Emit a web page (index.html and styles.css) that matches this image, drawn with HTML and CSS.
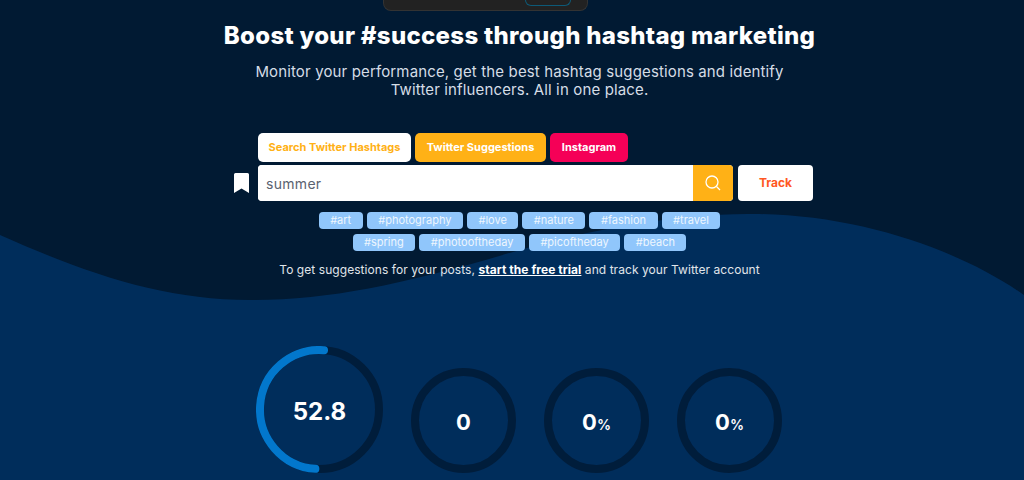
FILE: index.html
```html
<!DOCTYPE html>
<html lang="en">
<head>
  <meta charset="UTF-8">
  <title>Hashtag Marketing</title>
  <link rel="stylesheet" href="styles.css">
</head>
<body>

<div class="page">
  <svg class="wave" viewBox="0 0 1024 480" preserveAspectRatio="none">
    <path d="M0 235C90 275 165 300 250 300C330 300 400 285 513 252C590 229 680 213 755 214C860 215 960 250 1024 295V480H0Z"/>
  </svg>

  <div class="top-card"><span class="top-pill"></span></div>

  <h1>Boost your #success through hashtag marketing</h1>
  <p class="intro">Monitor your performance, get the best hashtag suggestions and identify<br>Twitter influencers. All in one place.</p>

  <div class="search-block">
    <div class="tabs">
      <button class="tab tab-active">Search Twitter Hashtags</button>
      <button class="tab tab-orange">Twitter Suggestions</button>
      <button class="tab tab-pink">Instagram</button>
    </div>
    <div class="search-row">
      <svg class="bookmark" viewBox="0 0 15 20"><path d="M1.5 0H13.5A1.5 1.5 0 0 1 15 1.500V20L7.500 15.500L0 20V1.500A1.500 1.500 0 0 1 1.500 0Z"/></svg>
      <div class="search-box">
        <input type="text" value="summer">
        <button class="search-btn">
          <svg viewBox="0 0 16 16"><circle cx="7" cy="7" r="6"/><path d="M11.500 11.500L15 15"/></svg>
        </button>
      </div>
      <button class="track">Track</button>
    </div>
  </div>

  <div class="tags">
    <div class="tag-row">
      <span class="tag">#art</span>
      <span class="tag">#photography</span>
      <span class="tag">#love</span>
      <span class="tag">#nature</span>
      <span class="tag">#fashion</span>
      <span class="tag">#travel</span>
    </div>
    <div class="tag-row">
      <span class="tag">#spring</span>
      <span class="tag">#photooftheday</span>
      <span class="tag">#picoftheday</span>
      <span class="tag">#beach</span>
    </div>
  </div>

  <p class="notice">To get suggestions for your posts, <a href="#">start the free trial</a> and track your Twitter account</p>

  <div class="rings">
    <div class="ring ring-big">
      <svg viewBox="0 0 127 127">
        <circle class="ring-track" cx="63.500" cy="63.500" r="59.500"/>
        <circle class="ring-value" cx="63.500" cy="63.500" r="59.500" stroke-dasharray="187 374" transform="rotate(94 63.500 63.500)"/>
      </svg>
      <span class="ring-num">52.8</span>
    </div>
    <div class="ring">
      <svg viewBox="0 0 105 105"><circle class="ring-track" cx="52.500" cy="52.500" r="48.500"/></svg>
      <span class="ring-num">0</span>
    </div>
    <div class="ring">
      <svg viewBox="0 0 105 105"><circle class="ring-track" cx="52.500" cy="52.500" r="48.500"/></svg>
      <span class="ring-num">0<small>%</small></span>
    </div>
    <div class="ring">
      <svg viewBox="0 0 105 105"><circle class="ring-track" cx="52.500" cy="52.500" r="48.500"/></svg>
      <span class="ring-num">0<small>%</small></span>
    </div>
  </div>
</div>

</body>
</html>
```

FILE: styles.css
```css
body {
  margin: 0;
  font-family: Inter, "Liberation Sans", sans-serif;
  background: #011a33;
  color: #ffffff;
}

.page {
  position: relative;
  height: 480px;
  overflow: hidden;
  display: flex;
  flex-direction: column;
  align-items: center;
  padding-left: 15px;
  box-sizing: border-box;
}

.wave {
  position: absolute;
  top: 0;
  left: 0;
  width: 100%;
  height: 100%;
}

.wave path {
  fill: #002d5b;
}

.page > *:not(.wave) {
  position: relative;
}

.top-card {
  flex: none;
  width: 205px;
  height: 11px;
  margin-right: 68px;
  box-sizing: border-box;
  background: #222222;
  border: 1px solid #333333;
  border-top: none;
  border-radius: 0 0 8px 8px;
}

.top-pill {
  position: absolute;
  right: 16px;
  top: 0;
  width: 46px;
  height: 6px;
  box-sizing: border-box;
  border: 1px solid #0d5a78;
  border-top: none;
  border-radius: 0 0 12px 12px;
}

h1 {
  margin: 10px 0 0;
  font-size: 24px;
  line-height: 30px;
  font-weight: 800;
  letter-spacing: 0.3px;
  white-space: nowrap;
}

.intro {
  margin: 12px 0 0;
  font-size: 15px;
  line-height: 17.500px;
  text-align: center;
  color: #d5dde6;
  letter-spacing: 0.14px;
}

.search-block {
  width: 579px;
  margin: 35px -8px 0 0;
}

.tabs {
  display: flex;
  gap: 4px;
  margin-left: 24px;
}

.tab {
  height: 29px;
  padding: 0 0 2px;
  border: none;
  border-radius: 5px;
  font-family: inherit;
  font-size: 11px;
  font-weight: 700;
  color: #ffffff;
}

.tab-active {
  width: 153px;
  background: #ffffff;
  color: #ffb116;
}

.tab-orange {
  width: 131px;
  background: #ffb116;
}

.tab-pink {
  width: 78px;
  background: #f50057;
}

.search-row {
  display: flex;
  align-items: center;
  margin-top: 3px;
}

.bookmark {
  width: 15px;
  height: 20px;
  margin-right: 9px;
  fill: #ffffff;
}

.search-box {
  display: flex;
  width: 475px;
  height: 36px;
  background: #ffffff;
  border-radius: 4px;
  overflow: hidden;
}

.search-box input {
  flex: 1;
  min-width: 0;
  border: none;
  outline: none;
  padding: 0 8px;
  font-family: inherit;
  font-size: 14px;
  color: #5a6270;
  letter-spacing: 0.3px;
}

.search-btn {
  width: 40px;
  padding: 0;
  border: none;
  background: #ffb116;
  display: grid;
  place-content: center;
}

.search-btn svg {
  width: 16px;
  height: 16px;
  fill: none;
  stroke: #ffffff;
  stroke-width: 1.300;
}

.track {
  width: 75px;
  height: 36px;
  margin-left: 5px;
  padding: 0 0 2px;
  border: none;
  border-radius: 4px;
  background: #ffffff;
  color: #ff5722;
  font-family: inherit;
  font-size: 12px;
  font-weight: 700;
}

.tags {
  display: flex;
  flex-direction: column;
  align-items: center;
  gap: 5px;
  margin-top: 11px;
}

.tag-row {
  display: flex;
  gap: 4px;
}

.tag {
  height: 17px;
  padding: 0 11.500px;
  border-radius: 4px;
  background: #90c6fb;
  color: #eef6fe;
  font-size: 11px;
  line-height: 17px;
}

.notice {
  margin: 11px 0 0;
  font-size: 12px;
  line-height: 16px;
  letter-spacing: 0.06px;
  color: #e0e5ea;
  white-space: nowrap;
}

.notice a {
  color: #ffffff;
  font-weight: 700;
}

.rings {
  display: flex;
  align-items: flex-end;
  gap: 28px;
  margin: 68px 1px 0 0;
}

.ring {
  display: grid;
  place-items: center;
  width: 105px;
  height: 105px;
}

.ring-big {
  width: 127px;
  height: 127px;
}

.ring svg,
.ring-num {
  grid-area: 1 / 1;
}

.ring svg {
  width: 100%;
  height: 100%;
}

.ring circle {
  fill: none;
  stroke-width: 8;
}

.ring-track {
  stroke: #001d3b;
}

.ring-value {
  stroke: #0277cc;
  stroke-linecap: round;
}

.ring-num {
  padding-top: 2px;
  font-size: 22px;
  font-weight: 700;
}

.ring-big .ring-num {
  padding-top: 3px;
  font-size: 24px;
}

.ring-num small {
  font-size: 14px;
  font-weight: 600;
}
```
